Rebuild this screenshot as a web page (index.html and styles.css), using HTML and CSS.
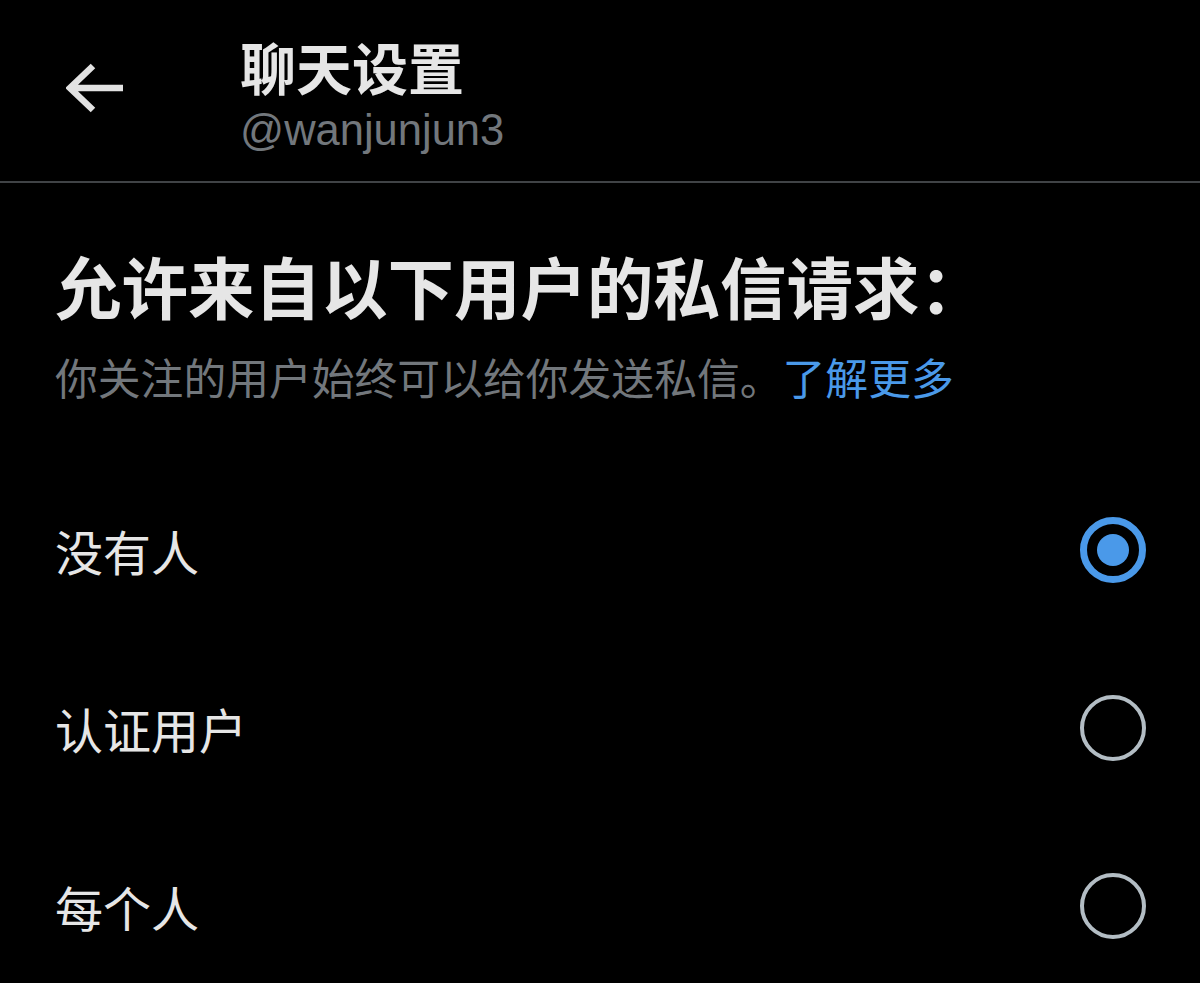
FILE: index.html
```html
<!DOCTYPE html>
<html lang="zh-CN">
<head>
<meta charset="utf-8">
<title>聊天设置</title>
<link rel="stylesheet" href="styles.css">
</head>
<body>
<header class="topbar">
  <div class="back">
    <svg viewBox="0 0 58 50" width="58" height="50" aria-hidden="true">
      <path d="M27 3 L4 25 L27 47 M4 25 L57 25" fill="none" stroke="#e2e2e2" stroke-width="6.5" stroke-linecap="butt" stroke-linejoin="miter"/>
    </svg>
  </div>
  <div class="titles">
    <div class="title">聊天设置</div>
    <div class="handle">@wanjunjun3</div>
  </div>
</header>
<main class="content">
  <h1 class="heading">允许来自以下用户的私信请求：</h1>
  <p class="sub">你关注的用户始终可以给你发送私信。<span class="link">了解更多</span></p>
  <ul class="options">
    <li class="option"><span class="label">没有人</span><span class="radio checked"><span class="dot"></span></span></li>
    <li class="option"><span class="label">认证用户</span><span class="radio"></span></li>
    <li class="option"><span class="label">每个人</span><span class="radio"></span></li>
  </ul>
</main>
</body>
</html>
```
FILE: styles.css
```css
html, body {
  margin: 0;
  padding: 0;
  background: #000;
}
body {
  font-family: "Noto Sans CJK SC", "Liberation Sans", sans-serif;
  color: #e7e7e7;
  width: 1200px;
  height: 983px;
  overflow: hidden;
}
.topbar {
  display: flex;
  align-items: flex-start;
  height: 181px;
  border-bottom: 2px solid #404346;
  padding-left: 66px;
  box-sizing: content-box;
}
.back {
  margin-top: 63px;
  width: 58px;
  height: 50px;
}
.back svg { display: block; }
.titles {
  margin-left: 116px;
  margin-top: 33px;
  display: flex;
  flex-direction: column;
}
.title {
  font-size: 56px;
  font-weight: 700;
  line-height: 66px;
  color: #e6e6e6;
}
.handle {
  font-family: "Liberation Sans", "Noto Sans", sans-serif;
  font-size: 43.5px;
  line-height: 50px;
  color: #72777c;
  margin-top: 6px;
}
.content {
  padding: 0 54px 0 55px;
}
.heading {
  margin: 63px 0 0;
  font-size: 66.5px;
  font-weight: 700;
  line-height: 78px;
  color: #e6e6e6;
  letter-spacing: 0;
  white-space: nowrap;
}
.sub {
  margin: 24px 0 0;
  font-size: 42.8px;
  line-height: 56px;
  color: #72777c;
  white-space: nowrap;
}
.link { color: #4a99e9; }
.options {
  list-style: none;
  margin: 57px 0 0;
  padding: 0;
}
.option {
  height: 178px;
  display: flex;
  align-items: center;
  justify-content: space-between;
}
.label {
  font-size: 48px;
  line-height: 60px;
  color: #e6e6e6;
}
.radio {
  width: 66px;
  height: 66px;
  box-sizing: border-box;
  border-radius: 50%;
  border: 4px solid #b3bdc4;
  display: flex;
  align-items: center;
  justify-content: center;
}
.radio.checked {
  border: 7px solid #4a99e9;
}
.dot {
  width: 32px;
  height: 32px;
  border-radius: 50%;
  background: #4a99e9;
}
```
